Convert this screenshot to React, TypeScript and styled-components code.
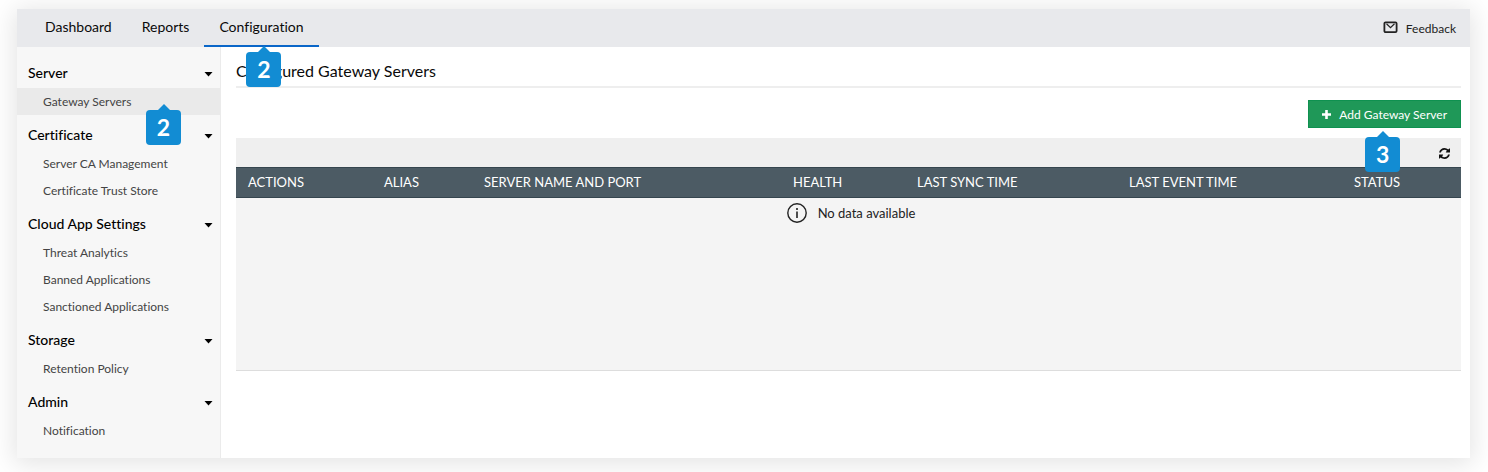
import React from "react";
import styled, { createGlobalStyle } from "styled-components";

const GlobalStyle = createGlobalStyle`
  *, *::before, *::after { box-sizing: border-box; }
  body {
    margin: 0;
    background: #fff;
    color: #0a0a0a;
    font-family: Lato, "Liberation Sans", sans-serif;
    font-size: 13px;
    font-variant-ligatures: none;
  }
  button, a { font: inherit; font-variant-ligatures: none; color: inherit; text-decoration: none; }
`;

const Page = styled.div`
  padding: 9px 18px 14px 17px;
  overflow: hidden;
`;

const Panel = styled.div`
  background: #fff;
  box-shadow: 0 3px 24px 3px rgba(0, 0, 0, 0.11);
`;

const TopBar = styled.header`
  display: flex;
  justify-content: space-between;
  height: 38px;
  padding: 0 14px 0 13px;
  background: #e8e9ec;
`;

const Tabs = styled.nav`
  display: flex;
`;

const Tab = styled.a<{ $active?: boolean }>`
  position: relative;
  padding: 0 15px;
  font-size: 14px;
  line-height: 36px;
  border-bottom: 2px solid ${(p) => (p.$active ? "#0a66c8" : "transparent")};
`;

const Feedback = styled.a`
  display: flex;
  align-items: center;
  gap: 8px;
  font-size: 12px;
  color: #222;

  svg {
    margin-bottom: 3px;
  }
`;

const Columns = styled.div`
  display: flex;
`;

const Sidebar = styled.aside`
  flex: 0 0 204px;
  padding: 6px 0 14px;
  background: #f7f7f7;
  border-right: 1px solid #ebebeb;
`;

const GroupButton = styled.button`
  display: flex;
  justify-content: space-between;
  align-items: center;
  width: 100%;
  height: 35px;
  padding: 4px 7px 0 11px;
  border: 0;
  background: none;
  font-size: 14px;
  font-weight: 500;
  color: #000;

  svg {
    margin-top: 3px;
  }
`;

const Items = styled.ul`
  margin: 0;
  padding: 0;
  list-style: none;
`;

const ItemLink = styled.a<{ $active?: boolean }>`
  display: block;
  position: relative;
  padding-left: 26px;
  font-size: 12px;
  line-height: 27px;
  color: #444;
  background: ${(p) => (p.$active ? "#eaeaea" : "transparent")};
`;

const Main = styled.main`
  flex: 1;
  min-width: 0;
  padding: 10px 9px 0 15px;
`;

const Title = styled.h1`
  margin: 0;
  padding-bottom: 2px;
  font-size: 16px;
  font-weight: 400;
  line-height: 27px;
  border-bottom: 2px solid #eee;
`;

const Actions = styled.div`
  display: flex;
  justify-content: flex-end;
  padding: 12px 0 10px;
`;

const AddButton = styled.button`
  display: flex;
  position: relative;
  align-items: center;
  gap: 8px;
  height: 28px;
  padding: 0 13px;
  border: 1px solid #0f9150;
  background: #1f9858;
  color: #fff;
  font-size: 12px;
`;

const TableTools = styled.div`
  display: flex;
  justify-content: flex-end;
  align-items: center;
  height: 29px;
  padding: 2px 11px 0 0;
  background: #efefef;
`;

const IconButton = styled.button`
  display: flex;
  padding: 0;
  border: 0;
  background: none;
  color: #111;
`;

const Table = styled.table`
  width: 100%;
  table-layout: fixed;
  border-collapse: separate;
  border-spacing: 0;
  border-bottom: 1px solid #ddd;
`;

const Th = styled.th<{ $width: number }>`
  width: ${(p) => p.$width}px;
  height: 31px;
  padding: 0 0 2px 12px;
  border: solid #35454e;
  border-width: 1px 0;
  background: #4c5b64;
  color: #fff;
  font-size: 13px;
  font-weight: 400;
  text-align: left;
  white-space: nowrap;
`;

const EmptyCell = styled.td`
  height: 172px;
  padding: 5px 0 0 5px;
  vertical-align: top;
  background: #f4f4f4;
`;

const EmptyMessage = styled.div`
  display: flex;
  justify-content: center;
  align-items: center;
  gap: 11px;
  font-size: 13px;
  color: #222;
`;

const Badge = styled.span<{ $left: number; $top: number }>`
  position: absolute;
  z-index: 2;
  left: ${(p) => p.$left}px;
  top: ${(p) => p.$top}px;
  width: 35px;
  height: 35px;
  border-radius: 4px;
  background: #128cd3;
  color: #fff;
  font-size: 23px;
  font-weight: 700;
  line-height: 35px;
  text-align: center;

  &::before {
    content: "";
    position: absolute;
    left: 12px;
    top: -6px;
    border: solid transparent;
    border-width: 0 6px 6px;
    border-bottom-color: #128cd3;
  }
`;

const Caret = () => (
  <svg width="9" height="5" viewBox="0 0 9 5" aria-hidden="true">
    <path d="M0.500 0h8L4.500 4.500z" fill="#000" />
  </svg>
);

const MailIcon = () => (
  <svg width="15" height="12" viewBox="0 0 15 12" fill="none" stroke="#222" aria-hidden="true">
    <rect x="1.400" y="1.400" width="12.200" height="9.700" rx="1.200" strokeWidth="1.800" />
    <path d="M3.500 2.800 7.500 6.600l4-3.800" strokeWidth="1.200" />
  </svg>
);

const PlusIcon = () => (
  <svg width="9" height="9" viewBox="0 0 9 9" aria-hidden="true">
    <path d="M3.2 0h2.6v3.2H9v2.6H5.8V9H3.2V5.8H0V3.2h3.2z" fill="#fff" />
  </svg>
);

const RefreshIcon = () => (
  <svg width="11" height="11" viewBox="0 0 1536 1536" fill="currentColor" aria-hidden="true">
    <path d="M1511 928q0 5-1 7-64 268-268 434.500T764 1536q-146 0-282.500-55T238 1324l-129 129q-19 19-45 19t-45-19-19-45V960q0-26 19-45t45-19h448q26 0 45 19t19 45-19 45l-137 137q71 66 161 102t187 36q134 0 250-65t186-179q11-17 53-117 8-23 30-23h192q13 0 22.500 9.500t9.500 22.500zm25-800v448q0 26-19 45t-45 19h-448q-26 0-45-19t-19-45 19-45l138-138Q969 256 768 256q-134 0-250 65T332 500q-11 17-53 117-8 23-30 23H50q-13 0-22.500-9.500T18 608v-7q65-268 270-434.500T768 0q146 0 284 55.500T1297 212l130-129q19-19 45-19t45 19 19 45z" />
  </svg>
);

const InfoIcon = () => (
  <svg width="20" height="20" viewBox="0 0 20 20" fill="none" stroke="#222" aria-hidden="true">
    <circle cx="10" cy="10" r="9.200" strokeWidth="1.4" />
    <path d="M10 8.500v6.500M10 5v2" strokeWidth="1.600" />
  </svg>
);

const groups = [
  { name: "Server", items: ["Gateway Servers"] },
  { name: "Certificate", items: ["Server CA Management", "Certificate Trust Store"] },
  {
    name: "Cloud App Settings",
    items: ["Threat Analytics", "Banned Applications", "Sanctioned Applications"],
  },
  { name: "Storage", items: ["Retention Policy"] },
  { name: "Admin", items: ["Notification"] },
];

const columns: [string, number][] = [
  ["ACTIONS", 136],
  ["ALIAS", 100],
  ["SERVER NAME AND PORT", 309],
  ["HEALTH", 124],
  ["LAST SYNC TIME", 212],
  ["LAST EVENT TIME", 225],
  ["STATUS", 119],
];

export default function App() {
  return (
    <Page>
      <GlobalStyle />
      <Panel>
        <TopBar>
          <Tabs>
            <Tab href="#dashboard">Dashboard</Tab>
            <Tab href="#reports">Reports</Tab>
            <Tab href="#configuration" $active aria-current="page">
              Configuration
              <Badge $left={42} $top={43}>2</Badge>
            </Tab>
          </Tabs>
          <Feedback href="#feedback">
            <MailIcon />
            Feedback
          </Feedback>
        </TopBar>
        <Columns>
          <Sidebar>
            {groups.map((group) => (
              <section key={group.name}>
                <GroupButton type="button" aria-expanded="true">
                  {group.name}
                  <Caret />
                </GroupButton>
                <Items>
                  {group.items.map((item) => {
                    const active = item === "Gateway Servers";
                    return (
                      <li key={item}>
                        <ItemLink href="#settings" $active={active}>
                          {item}
                          {active && <Badge $left={129} $top={22}>2</Badge>}
                        </ItemLink>
                      </li>
                    );
                  })}
                </Items>
              </section>
            ))}
          </Sidebar>
          <Main>
            <Title>Configured Gateway Servers</Title>
            <Actions>
              <AddButton type="button">
                <PlusIcon />
                Add Gateway Server
                <Badge $left={56} $top={36}>3</Badge>
              </AddButton>
            </Actions>
            <TableTools>
              <IconButton type="button" aria-label="Refresh">
                <RefreshIcon />
              </IconButton>
            </TableTools>
            <Table>
              <thead>
                <tr>
                  {columns.map(([label, width]) => (
                    <Th key={label} scope="col" $width={width}>
                      {label}
                    </Th>
                  ))}
                </tr>
              </thead>
              <tbody>
                <tr>
                  <EmptyCell colSpan={columns.length}>
                    <EmptyMessage>
                      <InfoIcon />
                      No data available
                    </EmptyMessage>
                  </EmptyCell>
                </tr>
              </tbody>
            </Table>
          </Main>
        </Columns>
      </Panel>
    </Page>
  );
}
